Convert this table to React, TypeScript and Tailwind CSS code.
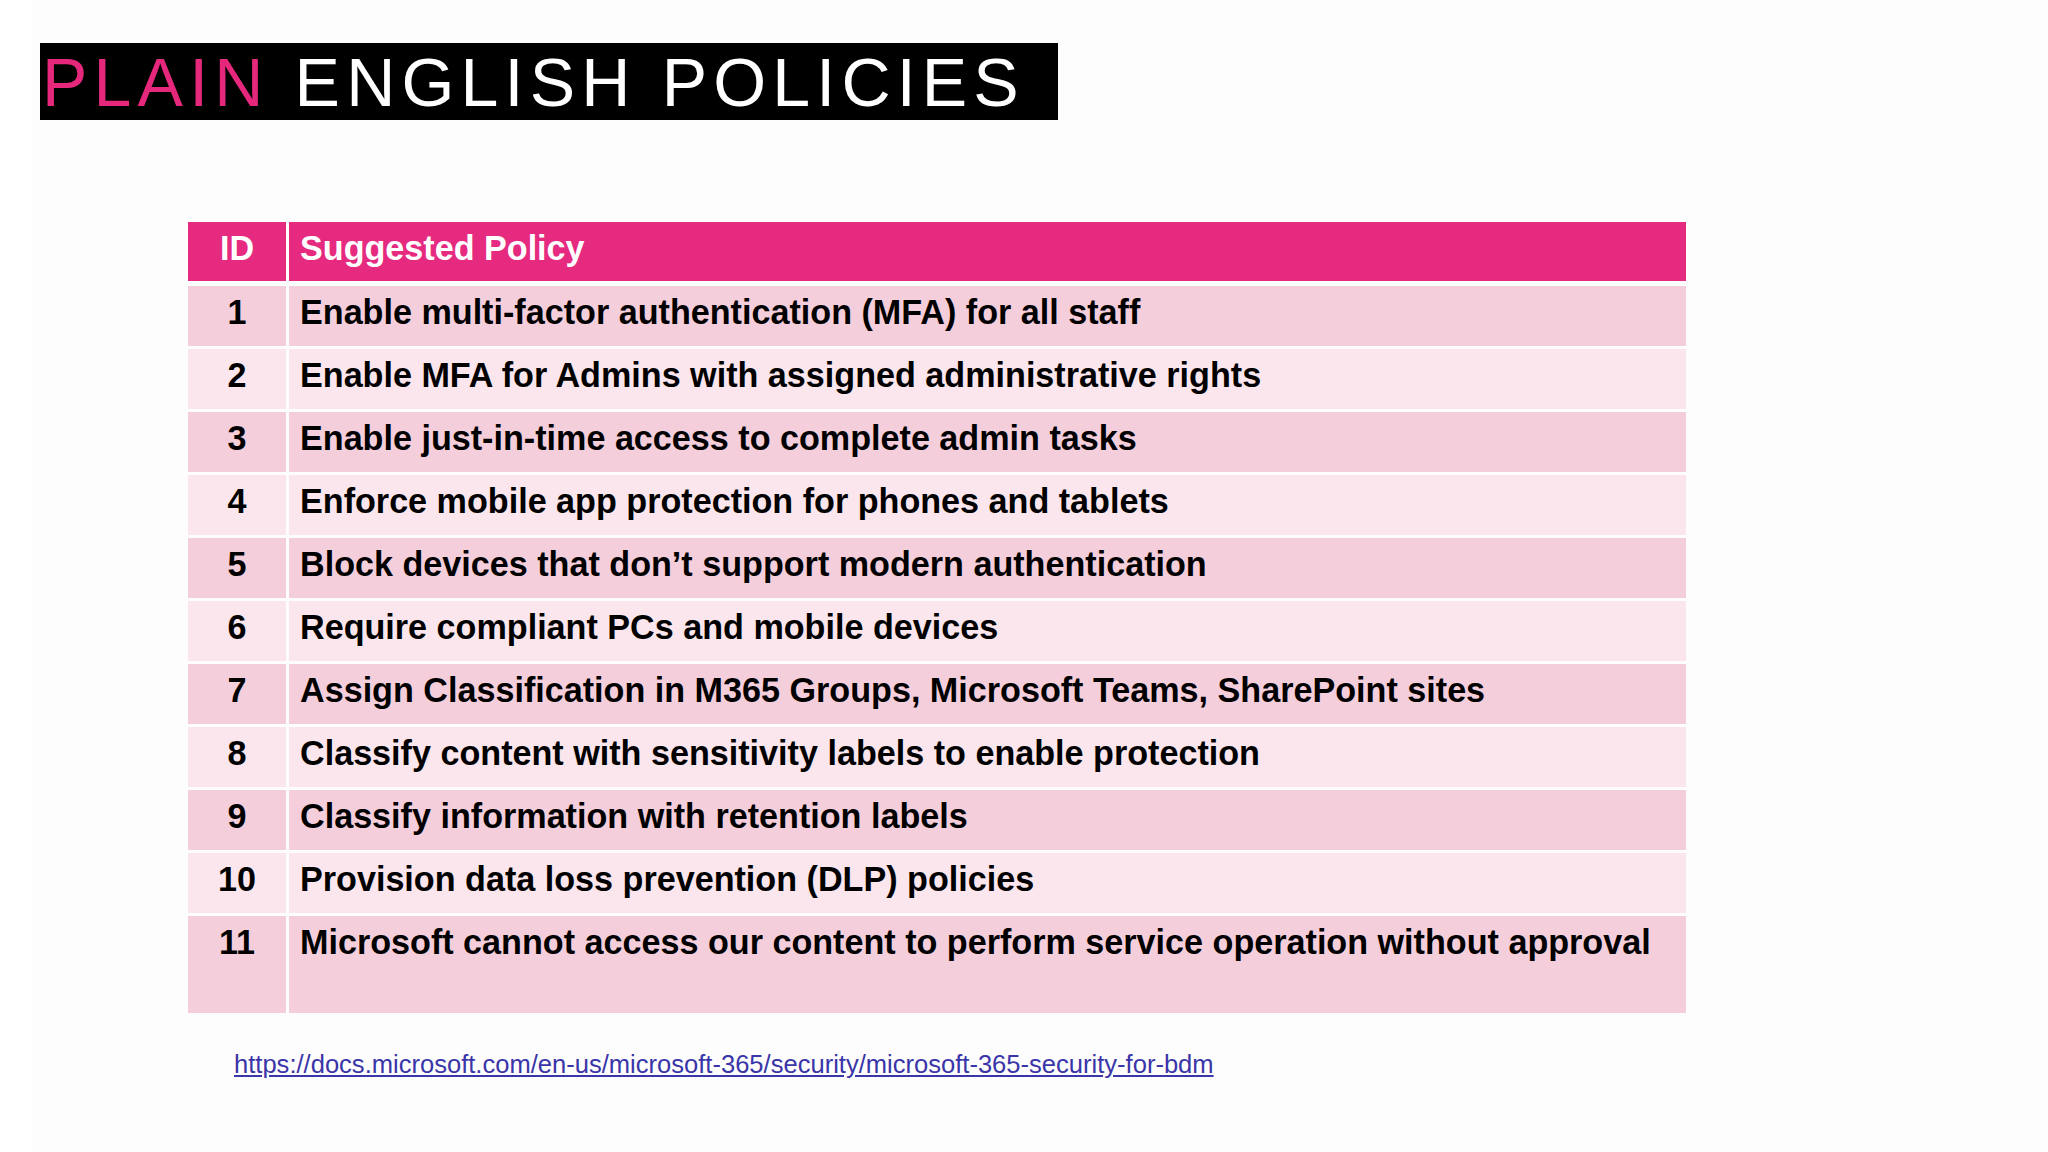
const policies = [
  "Enable multi-factor authentication (MFA) for all staff",
  "Enable MFA for Admins with assigned administrative rights",
  "Enable just-in-time access to complete admin tasks",
  "Enforce mobile app protection for phones and tablets",
  "Block devices that don\u2019t support modern authentication",
  "Require compliant PCs and mobile devices",
  "Assign Classification in M365 Groups, Microsoft Teams, SharePoint sites",
  "Classify content with sensitivity labels to enable protection",
  "Classify information with retention labels",
  "Provision data loss prevention (DLP) policies",
  "Microsoft cannot access our content to perform service operation without approval",
];

export default function App() {
  return (
    <div className="h-[1152px] w-[2048px] bg-white font-['Liberation_Sans',Arial,sans-serif]">
      <div className="ml-[32px] flex h-full flex-col bg-[#fdfdfd] pt-[43px]">
        {/* Title */}
        <div className="ml-[8px] flex h-[77px] w-[1018px] items-center bg-black pl-[2px]">
          <span className="text-[68px] leading-none tracking-[6.2px] text-white">
            <span className="text-[#e6287c]">PLAIN</span> ENGLISH POLICIES
          </span>
        </div>

        {/* Table */}
        <div className="ml-[156px] mt-[102px] flex w-[1498px] flex-col gap-[3px]">
          <div className="mb-[2px] flex h-[59px] gap-[3px] text-[34.15px] font-bold leading-[40px] text-white">
            <div className="w-[98px] bg-[#e52a7f] pt-[6px] text-center">ID</div>
            <div className="flex-1 bg-[#e52a7f] pl-[11px] pt-[6px]">Suggested Policy</div>
          </div>
          {policies.map((p, i) => {
            const bg = i % 2 === 0 ? "bg-[#f5cedb]" : "bg-[#fae6ec]";
            const h = i === policies.length - 1 ? "h-[97px]" : "h-[60px]";
            return (
              <div key={i} className={`flex gap-[3px] text-[34.15px] font-bold leading-[40px] text-black ${h}`}>
                <div className={`w-[98px] pt-[6px] text-center ${bg}`}>{i + 1}</div>
                <div className={`flex-1 pl-[11px] pt-[6px] ${bg}`}>{p}</div>
              </div>
            );
          })}
        </div>

        {/* Source link */}
        <a
          href="https://docs.microsoft.com/en-us/microsoft-365/security/microsoft-365-security-for-bdm"
          className="ml-[202px] mt-[36px] w-fit text-[25.55px] leading-[30px] text-[#3a35a8] underline"
        >
          https://docs.microsoft.com/en-us/microsoft-365/security/microsoft-365-security-for-bdm
        </a>
      </div>
    </div>
  );
}
